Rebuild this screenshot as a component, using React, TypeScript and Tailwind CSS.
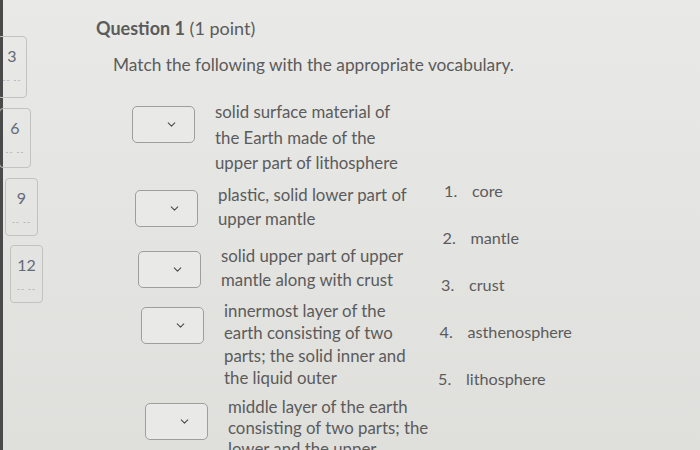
import { ChevronDown } from "lucide-react";

const rows = [
  { ml: "ml-0", mt: "mt-0", lines: ["solid surface material of", "the Earth made of the", "upper part of lithosphere"], lead: "leading-[25.5px]" },
  { ml: "ml-[3px]", mt: "mt-[7px]", lines: ["plastic, solid lower part of", "upper mantle"], lead: "leading-[24px]" },
  { ml: "ml-[6px]", mt: "mt-[13px]", lines: ["solid upper part of upper", "mantle along with crust"], lead: "leading-[24px]" },
  { ml: "ml-[9px]", mt: "mt-[8px]", lines: ["innermost layer of the", "earth consisting of two", "parts; the solid inner and", "the liquid outer"], lead: "leading-[22.5px]" },
  { ml: "ml-[13px]", mt: "mt-[6px]", lines: ["middle layer of the earth", "consisting of two parts; the", "lower and the upper"], lead: "leading-[21px]" },
];

const choices = ["core", "mantle", "crust", "asthenosphere", "lithosphere"];

const tiles = [
  { n: "3", cls: "ml-[-6px] w-[30px] h-[62px] mt-[36px]" },
  { n: "6", cls: "ml-[-4px] w-[32px] h-[60px] mt-[10px]" },
  { n: "9", cls: "ml-[2px] w-[33px] h-[58px] mt-[10px]" },
  { n: "12", cls: "ml-[7px] w-[33px] h-[58px] mt-[9px]" },
];

const App = () => {
  return (
    <div
      className="w-[700px] h-[450px] overflow-hidden flex bg-gradient-to-b from-[#e9e9e7] to-[#dfdfdc] text-[#5b5b5b]"
      style={{ fontFamily: "Lato, 'Open Sans', sans-serif" }}
    >
      <div className="w-[3px] h-full bg-[#4a4a4a]" />
      <div className="w-[80px] flex flex-col">
        {tiles.map((t) => (
          <div
            key={t.n}
            className={`${t.cls} border border-[#c2c2c0] rounded-[4px] flex flex-col items-center pt-[9px]`}
          >
            <span className="text-[16px] leading-[20px] text-[#646a78]">{t.n}</span>
            <span className="mt-[10px] text-[8px] leading-[8px] tracking-[1px] text-[#9a9ca3]">-- --</span>
          </div>
        ))}
      </div>
      <div className="flex flex-col ml-[13px]">
        <div className="mt-[17px] text-[18px] leading-[22px]">
          <span className="font-bold">Question 1</span> (1 point)
        </div>
        <div className="mt-[15px] ml-[17px] text-[17.3px] leading-[22px]">
          Match the following with the appropriate vocabulary.
        </div>
        <div className="flex mt-[23px] ml-[36px]">
          <div className="flex flex-col w-[300px]">
            {rows.map((r, i) => (
              <div key={i} className={`flex ${r.ml} ${r.mt}`}>
                <div className="mt-[7px] w-[63px] h-[37px] border border-[#9e9e9c] rounded-[5px] bg-[#e9e9e7] flex items-center justify-end pr-[16px]">
                  <ChevronDown size={13} strokeWidth={2} className="text-[#4b4b4b]" />
                </div>
                <div className={`ml-[20px] text-[16.8px] ${r.lead}`}>
                  {r.lines.map((l) => (
                    <div key={l}>{l}</div>
                  ))}
                </div>
              </div>
            ))}
          </div>
          <div className="flex flex-col ml-[12px] mt-[81px]">
            {choices.map((c, i) => (
              <div
                key={c}
                className="flex text-[16.2px] leading-[22px] h-[47px]"
                style={{ marginLeft: `${-i * 1.5}px` }}
              >
                <span className="w-[28px]">{i + 1}.</span>
                <span>{c}</span>
              </div>
            ))}
          </div>
        </div>
      </div>
    </div>
  );
};

export default App;
